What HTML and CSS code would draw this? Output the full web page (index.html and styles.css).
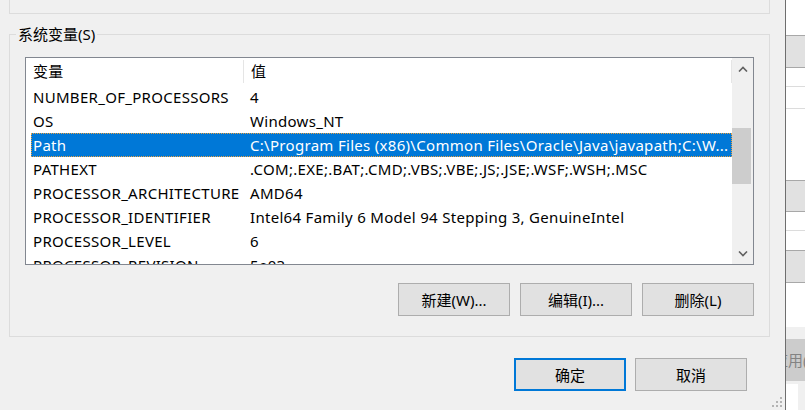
FILE: index.html
```html
<!DOCTYPE html>
<html lang="zh-CN">
<head>
    <meta charset="UTF-8">
    <title>环境变量</title>
    <link rel="stylesheet" href="styles.css">
</head>
<body>

    <!-- ダイアログ本体 -->
    <div class="dialog">
        <!-- 上のグループ（下端だけ見えている） -->
        <div class="prev-group"></div>

        <!-- 系统变量 -->
        <div class="group">
            <span class="group-title">系统变量(S)</span>

            <div class="list">
                <div class="list-body">
                    <div class="list-head">
                        <div class="head-cell name">变量</div>
                        <div class="head-cell value">值</div>
                    </div>
                    <div class="row"><div class="cell name">NUMBER_OF_PROCESSORS</div><div class="cell value">4</div></div>
                    <div class="row"><div class="cell name">OS</div><div class="cell value">Windows_NT</div></div>
                    <div class="row selected"><div class="cell name">Path</div><div class="cell value">C:\Program Files (x86)\Common Files\Oracle\Java\javapath;C:\W...</div></div>
                    <div class="row"><div class="cell name">PATHEXT</div><div class="cell value">.COM;.EXE;.BAT;.CMD;.VBS;.VBE;.JS;.JSE;.WSF;.WSH;.MSC</div></div>
                    <div class="row"><div class="cell name">PROCESSOR_ARCHITECTURE</div><div class="cell value">AMD64</div></div>
                    <div class="row"><div class="cell name">PROCESSOR_IDENTIFIER</div><div class="cell value">Intel64 Family 6 Model 94 Stepping 3, GenuineIntel</div></div>
                    <div class="row"><div class="cell name">PROCESSOR_LEVEL</div><div class="cell value">6</div></div>
                    <div class="row"><div class="cell name">PROCESSOR_REVISION</div><div class="cell value">5e03</div></div>
                </div>

                <!-- スクロールバー -->
                <div class="scrollbar">
                    <div class="sb-btn">
                        <svg width="10" height="6" viewBox="0 0 10 6"><path d="M1 5.5 L5 1.5 L9 5.5" fill="none" stroke="#606060" stroke-width="1.6"/></svg>
                    </div>
                    <div class="sb-track">
                        <div class="sb-thumb"></div>
                    </div>
                    <div class="sb-btn">
                        <svg width="10" height="6" viewBox="0 0 10 6"><path d="M1 0.5 L5 4.5 L9 0.5" fill="none" stroke="#606060" stroke-width="1.6"/></svg>
                    </div>
                </div>
            </div>

            <div class="group-actions">
                <button class="btn">新建(W)...</button>
                <button class="btn">编辑(I)...</button>
                <button class="btn">删除(L)</button>
            </div>
        </div>

        <!-- 确定 / 取消 -->
        <div class="footer">
            <button class="btn default">确定</button>
            <button class="btn">取消</button>
        </div>

        <!-- サイズ変更グリップ -->
        <svg class="grip" width="12" height="12" viewBox="0 0 12 12">
            <rect x="9" y="1" width="2" height="2" fill="#b4b4b4"/>
            <rect x="5" y="5" width="2" height="2" fill="#b4b4b4"/>
            <rect x="9" y="5" width="2" height="2" fill="#b4b4b4"/>
            <rect x="1" y="9" width="2" height="2" fill="#b4b4b4"/>
            <rect x="5" y="9" width="2" height="2" fill="#b4b4b4"/>
            <rect x="9" y="9" width="2" height="2" fill="#b4b4b4"/>
        </svg>
    </div>

    <!-- 後ろのウィンドウ（右端だけ見えている） -->
    <div class="backdrop">
        <div class="bd-space" style="height:35px"></div>
        <div class="bd-btn" style="height:33px"></div>
        <div class="bd-space line" style="height:18px"></div>
        <div class="bd-space line" style="height:21px"></div>
        <div class="bd-space" style="height:71px"></div>
        <div class="bd-btn" style="height:32px"></div>
        <div class="bd-space line" style="height:18px"></div>
        <div class="bd-space" style="height:19px"></div>
        <div class="bd-btn" style="height:33px"></div>
        <div class="bd-space" style="height:44px"></div>
        <div class="bd-gap"></div>
        <div class="bd-apply"><span>应用(A)</span></div>
        <div class="bd-bottom"></div>
    </div>

</body>
</html>
```

FILE: styles.css
```css
/* ベース */
body {
    margin: 0;
    width: 805px;
    height: 410px;
    display: flex;
    overflow: hidden;
    background-color: #f0f0f0;
    color: #000;
    font-family: "Noto Sans", "Noto Sans CJK SC", sans-serif;
    font-size: 15px;
}

/* ダイアログ */
.dialog {
    position: relative;
    width: 786px;
    box-sizing: border-box;
    padding: 0 15px 0 9px;
    border-right: 1px solid #6e6e6e;
    display: flex;
    flex-direction: column;
}

.prev-group {
    height: 13px;
    border: 1px solid #dcdcdc;
    border-top: none;
}

/* グループボックス */
.group {
    position: relative;
    margin-top: 20px;
    padding: 22px 15px 20px;
    border: 1px solid #dcdcdc;
}

.group-title {
    position: absolute;
    top: -9px;
    left: 6px;
    padding: 0 2px;
    line-height: 16px;
    background-color: #f0f0f0;
}

/* リストビュー */
.list {
    height: 206px;
    display: flex;
    border: 1px solid #828790;
    background-color: #fff;
}

.list-body {
    flex: 1;
    overflow: hidden;
    letter-spacing: 0.3px;
}

.list-head {
    display: flex;
    height: 27px;
    line-height: 27px;
}

.head-cell {
    position: relative;
    box-sizing: border-box;
}

.head-cell::after {
    content: "";
    position: absolute;
    right: 0;
    top: 2px;
    bottom: 2px;
    width: 1px;
    background-color: #e5e5e5;
}

.head-cell.name {
    width: 218px;
    padding-left: 7px;
}

.head-cell.value {
    flex: 1;
    padding-left: 7px;
}

.row {
    display: flex;
    height: 24px;
    line-height: 24px;
    margin-left: 5px;
    white-space: nowrap;
}

.cell {
    overflow: hidden;
    box-sizing: border-box;
}

.cell.name {
    width: 212px;
    padding-left: 2px;
}

.cell.value {
    flex: 1;
    padding-left: 7px;
}

.row.selected {
    background-color: #0078d7;
    color: #fff;
    outline: 1px dotted #e8a040;
    outline-offset: -1px;
}

/* スクロールバー */
.scrollbar {
    width: 21px;
    display: flex;
    flex-direction: column;
    background-color: #f0f0f0;
}

.sb-btn {
    height: 21px;
    display: flex;
    align-items: center;
    justify-content: center;
}

.sb-track {
    flex: 1;
}

.sb-thumb {
    height: 56px;
    margin: 49px 2px 0 0;
    background-color: #cdcdcd;
}

/* ボタン */
.btn {
    width: 112px;
    height: 33px;
    padding: 0;
    border: 1px solid #adadad;
    background-color: #e1e1e1;
    color: #000;
    font-family: inherit;
    font-size: 15px;
}

.btn.default {
    border: 2px solid #0078d7;
}

.group-actions {
    display: flex;
    justify-content: flex-end;
    gap: 10px;
    margin-top: 18px;
}

.footer {
    display: flex;
    justify-content: flex-end;
    gap: 9px;
    margin-top: 21px;
    padding-right: 23px;
}

.grip {
    position: absolute;
    right: 2px;
    bottom: 2px;
}

/* 背後のウィンドウ */
.backdrop {
    flex: 1;
    overflow: hidden;
    background-color: #fff;
    display: flex;
    flex-direction: column;
}

.bd-space.line {
    border-bottom: 1px solid #dcdcdc;
}

.bd-btn {
    box-sizing: border-box;
    border-top: 1px solid #a8a8a8;
    border-bottom: 1px solid #a8a8a8;
    background-color: #e1e1e1;
}

.bd-gap {
    height: 12px;
    background-color: #f0f0f0;
}

.bd-apply {
    height: 42px;
    line-height: 42px;
    background-color: #cccccc;
    color: #838383;
    white-space: nowrap;
}

.bd-apply span {
    display: inline-block;
    margin-left: -13px;
}

.bd-bottom {
    flex: 1;
    border-top: 3px solid #f0f0f0;
    background: linear-gradient(to right, #fff 12px, #f0f0f0 12px);
}
```
